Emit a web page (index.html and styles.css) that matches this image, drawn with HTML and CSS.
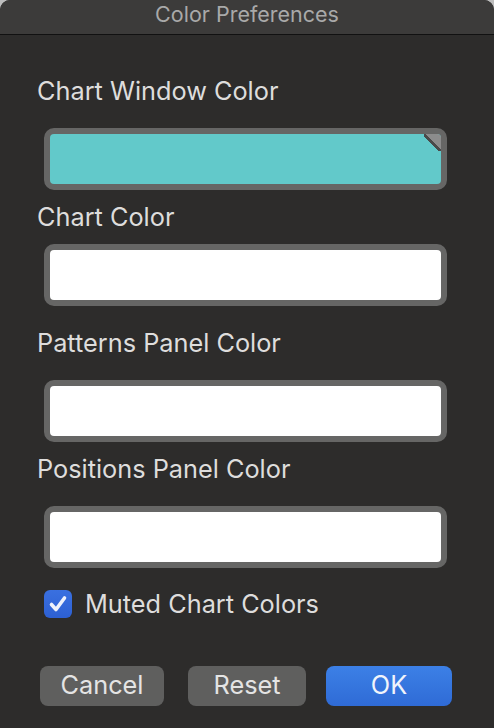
FILE: index.html
```html
<!DOCTYPE html>
<html>
<head>
<meta charset="utf-8">
<link rel="stylesheet" href="styles.css">
</head>
<body>
<div class="window">
  <div class="titlebar">Color Preferences</div>
  <div class="content">
    <div class="label l1">Chart Window Color</div>
    <div class="well w1"><div class="swatch cyan"><span class="corner"></span></div></div>
    <div class="label l2">Chart Color</div>
    <div class="well w2"><div class="swatch"></div></div>
    <div class="label l3">Patterns Panel Color</div>
    <div class="well w3"><div class="swatch"></div></div>
    <div class="label l4">Positions Panel Color</div>
    <div class="well w4"><div class="swatch"></div></div>
    <label class="check">
      <span class="box"><svg viewBox="0 0 28 28" width="28" height="28"><path d="M7.5 14.5 L12 19.5 L20.5 8" fill="none" stroke="#eef1fb" stroke-width="3.6" stroke-linecap="round" stroke-linejoin="round"/></svg></span>
      <span class="check-text">Muted Chart Colors</span>
    </label>
    <div class="buttons">
      <button class="btn cancel">Cancel</button>
      <button class="btn reset">Reset</button>
      <button class="btn ok">OK</button>
    </div>
  </div>
</div>
</body>
</html>
```
FILE: styles.css
```css
html, body {
  margin: 0;
  padding: 0;
  background: #bdbdbd;
}
body {
  width: 494px;
  height: 728px;
  overflow: hidden;
  font-family: Inter, "Liberation Sans", sans-serif;
}
.window {
  width: 494px;
  height: 728px;
  background: #2d2c2b;
  border-radius: 10px 10px 0 0;
  overflow: hidden;
}
.titlebar {
  height: 34px;
  background: #3c3b3a;
  border-bottom: 1px solid #111;
  color: #a9a9a9;
  font-size: 21.5px;
  line-height: 28px;
  text-align: center;
}
.content {
  display: flex;
  flex-direction: column;
  padding: 0 0 0 37px;
}
.label {
  color: #dedddc;
  font-size: 25.3px;
  line-height: 30px;
  height: 30px;
}
.l1 { margin-top: 41px; }
.l2 { margin-top: 12px; }
.l3 { margin-top: 22px; }
.l4 { margin-top: 12px; }
.well {
  margin-left: 7px;
  width: 391px;
  height: 50px;
  border: 6px solid #666665;
  border-radius: 10px;
  background: #666665;
}
.w1 { margin-top: 22px; }
.w2 { margin-top: 12px; }
.w3 { margin-top: 22px; }
.w4 { margin-top: 22px; }
.swatch {
  height: 50px;
  background: #fff;
  border-radius: 4px;
  position: relative;
  overflow: hidden;
}
.swatch.cyan {
  background: #62c9ca;
}
.corner {
  position: absolute;
  top: 0;
  right: 0;
  width: 17px;
  height: 17px;
  background: linear-gradient(to bottom left, #8c8c8c 0, #8c8c8c 46%, #4a4a4a 46%, #4a4a4a 57%, transparent 57%);
}
.check {
  display: flex;
  align-items: center;
  height: 30px;
  margin-top: 21px;
  margin-left: 7px;
}
.box {
  width: 28px;
  height: 28px;
  border-radius: 6px;
  background: linear-gradient(#3a70e0, #2d60d3);
  display: flex;
  align-items: center;
  justify-content: center;
}
.box svg {
  width: 28px;
  height: 28px;
}
.check-text {
  margin-left: 13px;
  color: #dedddc;
  font-size: 25.3px;
  line-height: 30px;
}
.buttons {
  display: flex;
  margin-top: 47px;
  margin-left: 3px;
}
.btn {
  height: 40px;
  border: none;
  border-radius: 8px;
  color: #e4e4e4;
  font-family: Inter, "Liberation Sans", sans-serif;
  font-size: 25.3px;
  padding: 0 0 3px 0;
  background: #5f5f5e;
}
.cancel { width: 124px; }
.reset { width: 118px; margin-left: 24px; }
.ok {
  width: 126px;
  margin-left: 20px;
  background: linear-gradient(#3c80e6, #2f6bd6);
  color: #f0f4fb;
}
```
